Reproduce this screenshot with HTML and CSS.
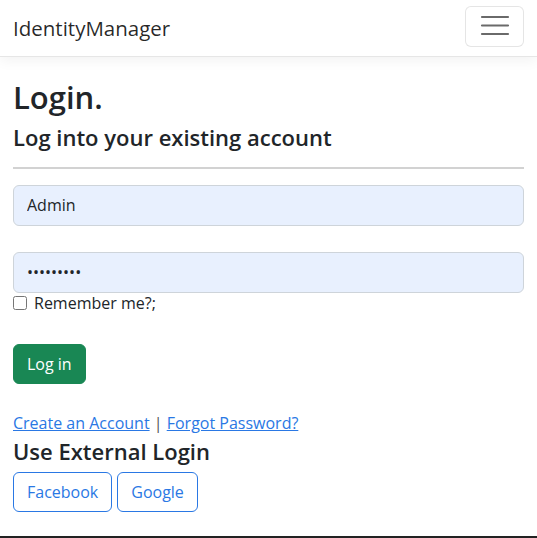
FILE: index.html
```html
<!DOCTYPE html>
<html lang="en">
<head>
<meta charset="utf-8">
<title>Log in - IdentityManager</title>
<link rel="stylesheet" href="styles.css">
</head>
<body>
<header class="navbar">
  <a class="brand" href="#">IdentityManager</a>
  <button class="toggler" type="button" aria-label="Toggle navigation">
    <svg class="toggler-icon" width="30" height="30" viewBox="0 0 30 30"><path d="M2 6h26M2 14.5h26M2 23h26" stroke="#6a6a6a" stroke-width="2.2" stroke-linecap="round"/></svg>
  </button>
</header>
<main class="content">
  <h1 class="title">Login.</h1>
  <h4 class="subtitle">Log into your existing account</h4>
  <hr class="rule">
  <form class="form">
    <div class="field">
      <input class="input" type="text" value="Admin">
    </div>
    <div class="field field-last">
      <input class="input" type="password" value="123456789">
    </div>
    <label class="check"><input type="checkbox" class="checkbox"> Remember me?;</label>
    <div class="submit-row">
      <button class="btn btn-success" type="button">Log in</button>
    </div>
  </form>
  <p class="links"><a href="#">Create an Account</a> | <a href="#">Forgot Password?</a></p>
  <h4 class="ext-title">Use External Login</h4>
  <div class="ext">
    <button class="btn btn-outline" type="button">Facebook</button>
    <button class="btn btn-outline" type="button">Google</button>
  </div>
</main>
<footer class="footer"></footer>
</body>
</html>
```
FILE: styles.css
```css
* { box-sizing: border-box; }
html, body { margin: 0; padding: 0; }
body {
  font-family: "Open Sans", "Noto Sans", sans-serif;
  font-size: 16px;
  color: #212529;
  background: #fff;
  width: 537px;
  height: 538px;
  overflow: hidden;
  display: flex;
  flex-direction: column;
}
.navbar {
  height: 57px;
  padding: 0 13px;
  display: flex;
  align-items: center;
  justify-content: space-between;
  border-bottom: 1px solid #e6e6e6;
  box-shadow: 0 4px 12px rgba(0,0,0,.05);
  flex: none;
}
.brand {
  font-size: 20.5px;
  color: rgba(0,0,0,.85);
  text-decoration: none;
}
.toggler {
  width: 59px;
  height: 41px;
  margin-top: -4px;
  border: 1px solid rgba(0,0,0,.1);
  border-radius: 6px;
  background: #fff;
  padding: 0;
  display: flex;
  align-items: center;
  justify-content: center;
}
.content {
  padding: 0 13px;
  flex: 1;
}
.title {
  font-size: 31px;
  font-weight: 600;
  line-height: 1.2;
  margin: 22px 0 8px;
}
.subtitle {
  font-size: 22px;
  font-weight: 600;
  line-height: 1.2;
  margin: 0;
}
.rule {
  border: 0;
  border-top: 2px solid #d2d2d2;
  margin: 16px 0 16px;
}
.form { margin: 0; }
.field { margin-bottom: 26px; }
.field-last { margin-bottom: 1px; }
.input {
  display: block;
  width: 100%;
  height: 41px;
  padding: 0 13px;
  font-family: inherit;
  font-size: 16px;
  color: #212529;
  background: #e8f0fe;
  border: 1px solid #ced4da;
  border-radius: 6px;
}
.check {
  display: flex;
  align-items: center;
  gap: 7px;
  font-size: 16px;
  height: 18px;
}
.checkbox {
  width: 14px;
  height: 14px;
  margin: 0;
}
.submit-row { margin-top: 32px; }
.btn {
  font-family: inherit;
  font-size: 16px;
  height: 40px;
  padding: 0 13px;
  border-radius: 6px;
  cursor: pointer;
}
.btn-success {
  background: #198754;
  border: 1px solid #198754;
  color: #fff;
}
.btn-outline {
  background: #fff;
  border: 1px solid #2a78e4;
  color: #2a78e4;
}
.links {
  margin: 28px 0 4px;
  font-size: 16px;
  color: #555;
}
.links a { color: #2a78e4; }
.ext-title {
  font-size: 22px;
  font-weight: 600;
  line-height: 1.2;
  margin: 0 0 8px;
}
.ext { display: flex; gap: 5px; }
.footer {
  flex: none;
  height: 2px;
  background: #222;
}
```
